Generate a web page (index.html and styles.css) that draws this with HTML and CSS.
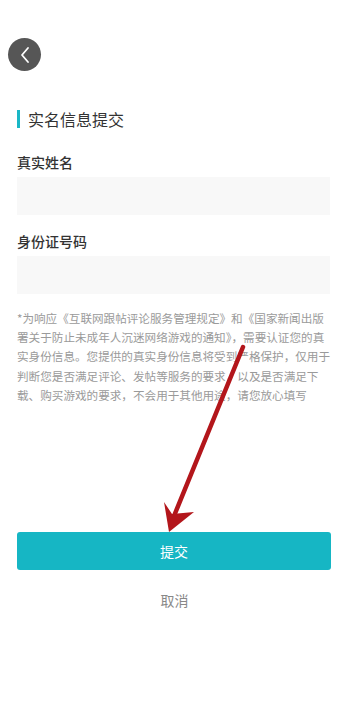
FILE: index.html
```html
<!DOCTYPE html>
<html>
<head>
  <meta charset="utf-8">
  <title>实名信息提交</title>
  <meta name="viewport" content="width=device-width, initial-scale=1">
  <link rel="stylesheet" href="styles.css">
</head>
<body>

  <div id="app">

    <div class="header">
      <button class="back">
        <svg width="14" height="18" viewBox="0 0 14 18">
          <polyline points="10,2 4,9 10,16" fill="none" stroke="#ffffff" stroke-width="1.8" stroke-linecap="round" stroke-linejoin="round"/>
        </svg>
      </button>
    </div>

    <div class="form">
      <h2 class="title">实名信息提交</h2>

      <p class="label">真实姓名</p>
      <div class="input"></div>

      <p class="label second">身份证号码</p>
      <div class="input"></div>

      <p class="notice">*为响应《互联网跟帖评论服务管理规定》和《国家新闻出版<br>署关于防止未成年人沉迷网络游戏的通知》，需要认证您的真<br>实身份信息。您提供的真实身份信息将受到严格保护，仅用于<br>判断您是否满足评论、发帖等服务的要求，以及是否满足下<br>载、购买游戏的要求，不会用于其他用途，请您放心填写</p>

      <button class="btn submit">提交</button>
      <div class="cancel">取消</div>
    </div>
  </div>

  <!-- red arrow drawn over the page -->
  <svg class="arrow" width="349" height="703" viewBox="0 0 349 703">
    <line x1="243" y1="347" x2="174" y2="516" stroke="#b3161b" stroke-width="4.5" stroke-linecap="round"/>
    <polygon points="169,532 164,502 172,514 194,512" fill="#b3161b"/>
  </svg>

</body>
</html>
```

FILE: styles.css
```css
body {
  margin: 0;
  background-color: #ffffff;
  font-family: "Noto Sans CJK SC", "Noto Sans", sans-serif;
  color: #333333;
}

#app {
  width: 349px;
  height: 703px;
}

.header {
  padding: 38px 0 0 8px;
}

.back {
  display: flex;
  align-items: center;
  justify-content: center;
  width: 33px;
  height: 33px;
  padding: 0;
  border: none;
  border-radius: 50%;
  background-color: #565656;
}

.form {
  padding: 0 17px;
}

.title {
  margin: 39px 0 0 0;
  padding-left: 8px;
  border-left: 3px solid #1ab7c6;
  font-size: 16px;
  font-weight: normal;
  line-height: 18px;
  color: #333333;
}

.label {
  margin: 24px 0 0 0;
  font-size: 14px;
  font-weight: 500;
  line-height: 20px;
  color: #333333;
}

.label.second {
  margin-top: 16px;
}

.input {
  margin-top: 5px;
  width: 313px;
  height: 38px;
  background-color: #f8f8f8;
}

.notice {
  margin: 15px 0 0 0;
  font-size: 11.6px;
  line-height: 19.2px;
  color: #9a9a9a;
  white-space: nowrap;
}

.btn {
  display: block;
  width: 314px;
  height: 38px;
  border: none;
  border-radius: 3px;
  font-family: "Noto Sans CJK SC", sans-serif;
  font-size: 14px;
  color: #ffffff;
}

.submit {
  margin-top: 127px;
  background-color: #16b6c4;
}

.cancel {
  margin-top: 20px;
  text-align: center;
  font-size: 14px;
  line-height: 20px;
  color: #888888;
}

.arrow {
  position: absolute;
  top: 0;
  left: 0;
  pointer-events: none;
}
```
